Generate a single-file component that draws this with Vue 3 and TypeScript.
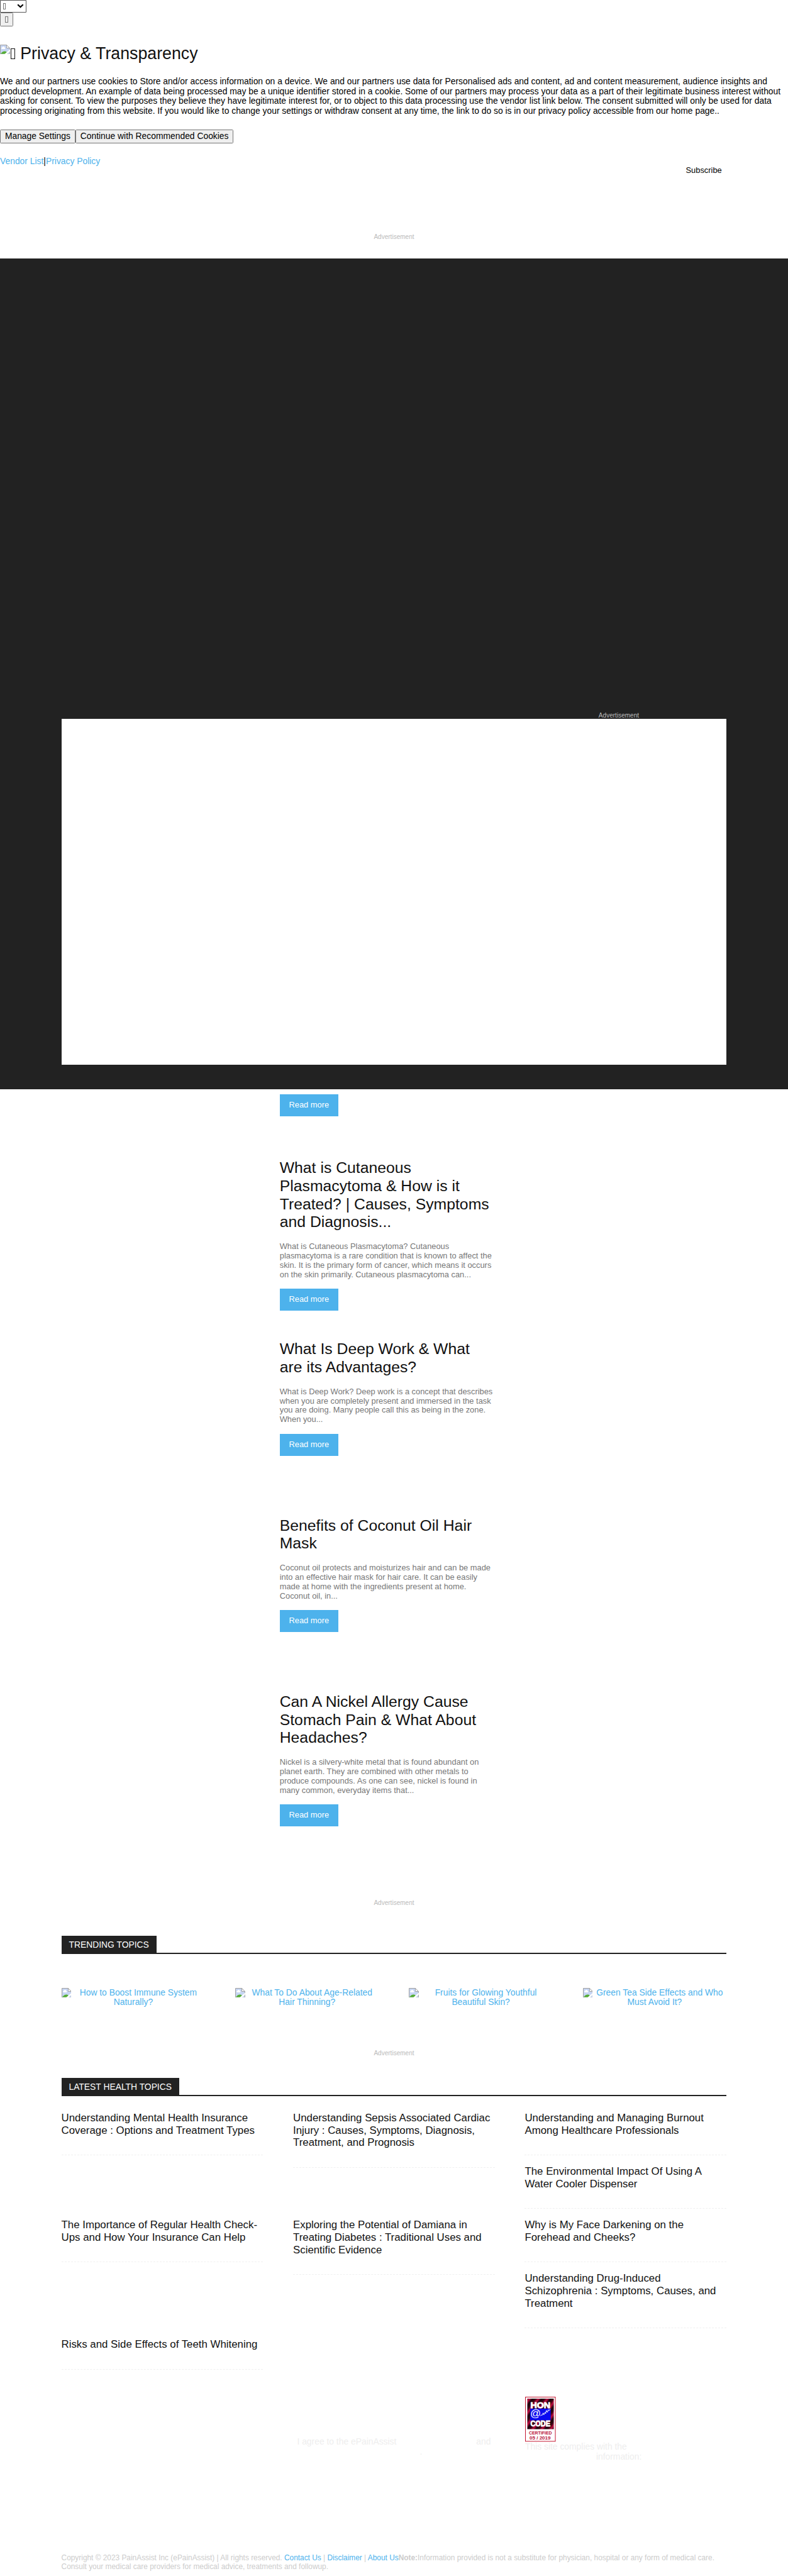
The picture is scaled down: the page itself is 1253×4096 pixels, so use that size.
<script setup lang="ts">
import { defineComponent, h } from 'vue'

interface Article {
  title: string
  excerpt: string
  gap: number
}

interface Topic {
  title: string
  offset: number
}

const articles: Article[] = [
  {
    title: 'What is Cutaneous\nPlasmacytoma & How is it\nTreated? | Causes, Symptoms\nand Diagnosis...',
    excerpt:
      'What is Cutaneous Plasmacytoma? Cutaneous\nplasmacytoma is a rare condition that is known to affect the\nskin. It is the primary form of cancer, which means it occurs\non the skin primarily. Cutaneous plasmacytoma can...',
    gap: 69,
  },
  {
    title: 'What Is Deep Work & What\nare its Advantages?',
    excerpt:
      'What is Deep Work? Deep work is a concept that describes\nwhen you are completely present and immersed in the task\nyou are doing. Many people call this as being in the zone.\nWhen you...',
    gap: 48,
  },
  {
    title: 'Benefits of Coconut Oil Hair\nMask',
    excerpt:
      'Coconut oil protects and moisturizes hair and can be made\ninto an effective hair mask for hair care. It can be easily\nmade at home with the ingredients present at home.\nCoconut oil, in...',
    gap: 98,
  },
  {
    title: 'Can A Nickel Allergy Cause\nStomach Pain & What About\nHeadaches?',
    excerpt:
      'Nickel is a silvery-white metal that is found abundant on\nplanet earth. They are combined with other metals to\nproduce compounds. As one can see, nickel is found in\nmany common, everyday items that...',
    gap: 98,
  },
]

const trending: string[] = [
  'How to Boost Immune System\nNaturally?',
  'What To Do About Age-Related\nHair Thinning?',
  'Fruits for Glowing Youthful\nBeautiful Skin?',
  'Green Tea Side Effects and Who\nMust Avoid It?',
]

const columns: Topic[][] = [
  [
    { title: 'Understanding Mental Health Insurance\nCoverage : Options and Treatment Types', offset: 0 },
    { title: 'The Importance of Regular Health Check-\nUps and How Your Insurance Can Help', offset: 86 },
    { title: 'Risks and Side Effects of Teeth Whitening', offset: 106 },
  ],
  [
    {
      title: 'Understanding Sepsis Associated Cardiac\nInjury : Causes, Symptoms, Diagnosis,\nTreatment, and Prognosis',
      offset: 0,
    },
    {
      title: 'Exploring the Potential of Damiana in\nTreating Diabetes : Traditional Uses and\nScientific Evidence',
      offset: 66,
    },
  ],
  [
    { title: 'Understanding and Managing Burnout\nAmong Healthcare Professionals', offset: 0 },
    { title: 'The Environmental Impact Of Using A\nWater Cooler Dispenser', offset: 0 },
    { title: 'Why is My Face Darkening on the\nForehead and Cheeks?', offset: 0 },
    { title: 'Understanding Drug-Induced\nSchizophrenia : Symptoms, Causes, and\nTreatment', offset: 0 },
  ],
]

const MissingImage = defineComponent({
  setup: () => () =>
    h('svg', { width: 16, height: 16, viewBox: '0 0 16 16' }, [
      h('path', { d: 'M.5 .5H10.5L15.5 5.5V15.5H.5Z', fill: '#c6d5f3' }),
      h('path', { d: 'M3 7a1.5 1.5 0 0 1 .6-2.8 2 2 0 0 1 3.7 0A1.5 1.5 0 0 1 7.600 7Z', fill: '#fff' }),
      h('path', { d: 'M1 15C3 11.500 5 10.500 7.500 10.500S11 11.500 12 15Z', fill: '#56ad35' }),
      h('path', { d: 'M.5 .5H10.5L15.5 5.5V15.5H.5Z', fill: 'none', stroke: '#a0a0a0' }),
      h('path', { d: 'M10.5 .5V5.5H15.5Z', fill: '#fff', stroke: '#a0a0a0' }),
      h('path', { d: 'M6.500 16L16 7.500V10.500L10.500 16Z', fill: '#fff' }),
    ]),
})
</script>

<template>
  <div class="page">
    <section class="consent">
      <div class="row select-row">
        <div class="select">
          <i class="tofu"></i>
          <svg width="11" height="7" viewBox="0 0 11 7"><path d="M1.200 1.200L5.500 5.300L9.800 1.200" fill="none" stroke="#000" stroke-width="2.200" /></svg>
        </div>
      </div>
      <div class="row"><button class="icon-btn"><i class="tofu"></i></button></div>
      <h2><span class="logo"><MissingImage /></span><i class="tofu big"></i> Privacy &amp; Transparency</h2>
      <p>We and our partners use cookies to Store and/or access information on a device. We and our partners use data for Personalised ads and content, ad and content measurement, audience insights and<br>product development. An example of data being processed may be a unique identifier stored in a cookie. Some of our partners may process your data as a part of their legitimate business interest without<br>asking for consent. To view the purposes they believe they have legitimate interest for, or to object to this data processing use the vendor list link below. The consent submitted will only be used for data<br>processing originating from this website. If you would like to change your settings or withdraw consent at any time, the link to do so is in our privacy policy accessible from our home page..</p>
      <div class="row actions"><button class="manage">Manage Settings</button><button class="accept">Continue with Recommended Cookies</button></div>
      <div class="policy"><a>Vendor List</a>|<a>Privacy Policy</a></div>
      <div class="subscribe">Subscribe</div>
      <div class="ad top-ad">Advertisement</div>
    </section>

    <section class="dark">
      <div class="ad">Advertisement</div>
      <div class="panel"></div>
    </section>

    <section class="articles">
      <a class="more">Read more</a>
      <article v-for="a in articles" :key="a.title" :style="{ marginTop: a.gap + 'px' }">
        <h3>{{ a.title }}</h3>
        <p>{{ a.excerpt }}</p>
        <a class="more">Read more</a>
      </article>
    </section>

    <div class="ad mid-ad">Advertisement</div>

    <section class="wrap trending">
      <h4><span>TRENDING TOPICS</span></h4>
      <div class="cells">
        <a v-for="t in trending" :key="t"><MissingImage class="pic" />{{ t }}</a>
      </div>
    </section>

    <div class="ad low-ad">Advertisement</div>

    <section class="wrap latest">
      <h4><span>LATEST HEALTH TOPICS</span></h4>
      <div class="cols">
        <div v-for="(col, i) in columns" :key="i" class="col">
          <div v-for="t in col" :key="t.title" class="topic" :style="{ marginTop: t.offset + 'px' }">{{ t.title }}</div>
        </div>
      </div>
    </section>

    <section class="compliance">
      <div class="agree">
        <div><span>I agree to the ePainAssist</span><span>and</span></div>
        <div class="dot">.</div>
      </div>
      <div class="hon">
        <svg width="49" height="72" viewBox="0 0 49 72">
          <defs>
            <linearGradient id="stripes" x1="0" y1="0" x2="9" y2="7" gradientUnits="userSpaceOnUse" spreadMethod="repeat">
              <stop offset="0" stop-color="#16000a" />
              <stop offset=".35" stop-color="#3a0012" />
              <stop offset=".65" stop-color="#c00c40" />
              <stop offset="1" stop-color="#16000a" />
            </linearGradient>
          </defs>
          <rect x=".5" y=".5" width="48" height="71" fill="#fff" stroke="#c4142e" />
          <rect x="3.500" y="3" width="42.500" height="49" fill="url(#stripes)" />
          <rect x="8" y="19" width="33" height="19" fill="#0a0af0" />
          <g fill="#fff" stroke="#fff" font-family="Liberation Sans, sans-serif" font-weight="700">
            <text x="8.500" y="18" font-size="13" textLength="32" lengthAdjust="spacingAndGlyphs" stroke-width=".9">HON</text>
            <text x="8.500" y="47.500" font-size="12.500" textLength="32" lengthAdjust="spacingAndGlyphs" stroke-width=".9">CODE</text>
          </g>
          <text x="8" y="32.500" font-size="17" fill="#fff" font-family="Liberation Sans, sans-serif">@</text>
          <path d="M24 31l2-2 1 1 2-4 1 3 2-4 1 2 1-5 2 3 1-4 2 1 1-2" fill="none" stroke="#fff" />
          <g fill="#b81238" font-family="Liberation Sans, sans-serif" font-weight="700">
            <text x="6" y="60.500" font-size="7" textLength="37" lengthAdjust="spacingAndGlyphs">CERTIFIED</text>
            <text x="7" y="68.800" font-size="7.500" textLength="34" lengthAdjust="spacingAndGlyphs">05 / 2019</text>
          </g>
        </svg>
        <div>This site complies with the</div>
        <div class="info">information:</div>
      </div>
    </section>

    <footer>
      Copyright © 2023 PainAssist Inc (ePainAssist) | All rights reserved. <a>Contact Us</a> | <a>Disclaimer</a> | <a>About Us</a><b>Note:</b>Information provided is not a substitute for physician, hospital or any form of medical care.<br>Consult your medical care providers for medical advice, treatments and followup.
    </footer>
  </div>
</template>

<style>
body {
  background: #fff;
  overflow: hidden;
}
</style>

<style scoped>
.page {
  width: 1265px;
  height: 4135px;
  overflow: hidden;
  zoom: 0.9905;
  background: #fff;
  color: #000;
  font-family: "Liberation Sans", Arial, sans-serif;
  font-size: 14px;
  line-height: 16px;
  white-space: nowrap;
}
h2, h3, h4, p {
  margin: 0;
  font-weight: 400;
}
a {
  color: #4db2ec;
}
.consent {
  height: 415px;
}
.row {
  display: flex;
  align-items: flex-start;
}
.select-row {
  height: 20px;
}
.select {
  display: flex;
  align-items: center;
  justify-content: space-between;
  width: 42.500px;
  height: 20px;
  padding: 0 3px 0 4px;
  box-sizing: border-box;
  border: 1px solid #555;
  border-radius: 1px;
}
.tofu {
  display: inline-block;
  width: 4.500px;
  height: 10px;
  box-sizing: border-box;
  border: 1px solid #777;
}
.tofu.big {
  width: 7.600px;
  height: 18px;
  margin: 0 .8px 0 .7px;
  border-color: #111;
}
button {
  height: 22px;
  margin: 0;
  padding: 1px 6px;
  font-family: inherit;
  font-size: 14px;
  line-height: 16px;
}
.icon-btn {
  display: flex;
  align-items: center;
  justify-content: center;
  width: 21px;
}
h2 {
  margin-top: 26px;
  height: 38px;
  font-size: 27px;
  line-height: 38px;
  color: #111;
}
.logo {
  display: inline-block;
  width: 16px;
  height: 16px;
  vertical-align: 8px;
  line-height: 0;
}
.consent p {
  margin-top: 17px;
}
.actions {
  margin-top: 21px;
}
.manage {
  width: 121px;
}
.accept {
  width: 254px;
}
.policy {
  margin-top: 21px;
}
.subscribe {
  margin-left: 1101px;
  font-size: 13px;
  line-height: 15px;
}
.ad {
  font-size: 10.150px;
  line-height: 12px;
  color: #bbb;
  text-align: center;
}
.top-ad {
  margin-top: 93px;
}
.dark {
  height: 1334px;
  padding-top: 728px;
  box-sizing: border-box;
  background: #222;
}
.dark .ad {
  width: 64px;
  height: 11px;
  margin-left: 961px;
}
.panel {
  width: 1068px;
  height: 555px;
  margin: 0 auto;
  background: #fff;
}
.articles {
  width: 348px;
  margin-left: 449px;
  padding-top: 8px;
  height: 1183px;
  box-sizing: border-box;
}
.more {
  display: block;
  width: 94px;
  height: 35px;
  box-sizing: border-box;
  padding: 10px 0;
  text-align: center;
  font-size: 13px;
  line-height: 15px;
  color: #fff;
  background: #4db2ec;
}
h3 {
  font-size: 25px;
  line-height: 29px;
  color: #111;
  white-space: pre;
}
.articles p {
  margin: 17px 0 15px;
  font-size: 13px;
  line-height: 15px;
  color: #777;
  white-space: pre;
}
.mid-ad {
  margin-top: 117px;
}
.wrap {
  width: 1068px;
  margin: 0 auto;
}
.trending {
  margin-top: 47px;
}
h4 {
  display: flex;
  height: 27px;
  border-bottom: 2.050px solid #222;
  font-size: 14px;
  line-height: 16px;
}
h4 span {
  padding: 7px 12px 4px;
  color: #fff;
  background: #222;
}
.cells {
  display: grid;
  grid-template-columns: repeat(4, 231px);
  column-gap: 48px;
  margin-top: 54px;
}
.cells a {
  text-align: center;
  white-space: pre-line;
}
.pic {
  float: left;
}
.low-ad {
  margin-top: 67px;
}
.latest {
  margin-top: 34px;
}
.cols {
  display: grid;
  grid-template-columns: repeat(3, 324px);
  column-gap: 48px;
  margin-top: 25px;
  height: 458px;
}
.col {
  display: flex;
  flex-direction: column;
}
.topic {
  margin-bottom: 16px;
  padding-bottom: 29px;
  border-bottom: 1px dashed #f0f0f0;
  font-size: 17px;
  line-height: 20px;
  color: #111;
  white-space: pre;
}
.compliance {
  display: flex;
  color: #eee;
}
.agree {
  width: 366px;
  margin: 64px 0 0 477px;
}
.agree > div {
  display: flex;
  justify-content: space-between;
  width: 311px;
}
.agree .dot {
  margin-left: 197px;
  width: auto;
}
.hon svg {
  display: block;
}
.info {
  margin-left: 114px;
}
footer {
  margin: 148px 0 0 98.500px;
  font-size: 12px;
  line-height: 14px;
  color: #ccc;
}
</style>
